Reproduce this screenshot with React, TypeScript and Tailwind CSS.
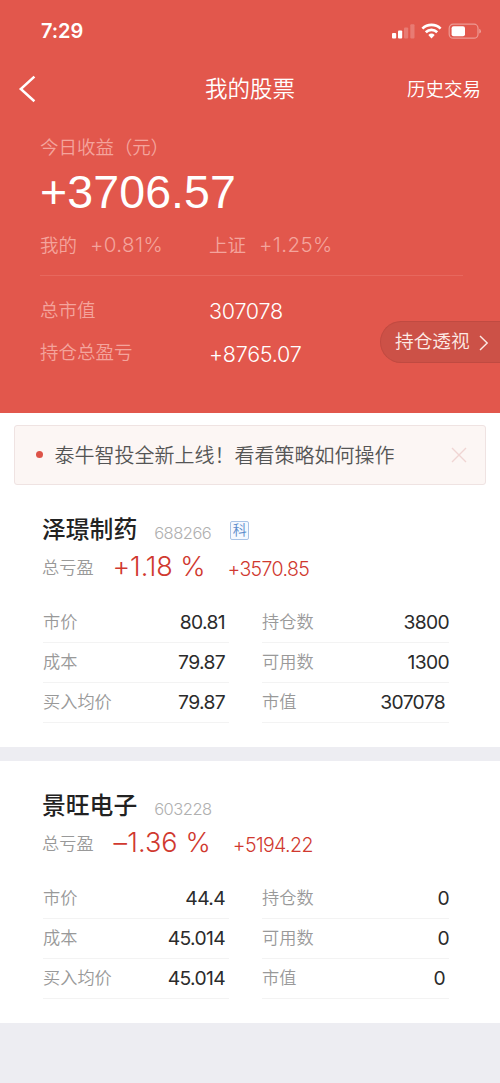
import clsx from 'clsx';

interface Row {
  label: string;
  value: string;
}

interface Holding {
  name: string;
  code: string;
  tag?: string;
  percent: string;
  profit: string;
  left: Row[];
  right: Row[];
}

const holdings: Holding[] = [
  {
    name: '泽璟制药',
    code: '688266',
    tag: '科',
    percent: '+1.18 %',
    profit: '+3570.85',
    left: [
      { label: '市价', value: '80.81' },
      { label: '成本', value: '79.87' },
      { label: '买入均价', value: '79.87' },
    ],
    right: [
      { label: '持仓数', value: '3800' },
      { label: '可用数', value: '1300' },
      { label: '市值', value: '307078' },
    ],
  },
  {
    name: '景旺电子',
    code: '603228',
    percent: '–1.36 %',
    profit: '+5194.22',
    left: [
      { label: '市价', value: '44.4' },
      { label: '成本', value: '45.014' },
      { label: '买入均价', value: '45.014' },
    ],
    right: [
      { label: '持仓数', value: '0' },
      { label: '可用数', value: '0' },
      { label: '市值', value: '0' },
    ],
  },
];

function StatusBar() {
  return (
    <div className="flex h-[62px] items-center justify-between pr-[19px] pl-[41px]">
      <span className="text-[20px] leading-6 font-semibold tracking-[-0.1px]">7:29</span>
      <svg width="90" height="18" viewBox="0 0 90 18" fill="#fff">
        <rect x="1" y="11" width="4.2" height="5.5" rx="1" />
        <rect x="7" y="8.5" width="4.2" height="8" rx="1" />
        <rect x="13" y="5.5" width="4.2" height="11" rx="1" opacity="0.22" />
        <rect x="19.3" y="2.3" width="4.2" height="14.2" rx="1" opacity="0.22" />
        <g fill="none" stroke="#fff" strokeWidth="2.7">
          <path d="M31.4 6.6a13 13 0 0 1 18.2 0" />
          <path d="M34.8 10.2a8.2 8.2 0 0 1 11.4 0" />
        </g>
        <path d="M37.3 13a4.7 4.7 0 0 1 6.4 0l-3.2 3.4z" />
        <rect x="58.2" y="2.2" width="28.8" height="14" rx="4" fill="none" stroke="#fff" strokeOpacity="0.4" strokeWidth="1.2" />
        <rect x="60.6" y="4.3" width="13.4" height="10" rx="2" />
        <path d="M88.3 6.8a2.6 2.6 0 0 1 0 4.8z" opacity="0.45" />
      </svg>
    </div>
  );
}

function NavBar() {
  return (
    <div className="grid h-[54px] grid-cols-[1fr_auto_1fr] items-center pr-[19px] pl-[18px]">
      <svg width="18" height="28" viewBox="0 0 18 28" fill="none" stroke="#fff" strokeWidth="2.5">
        <path d="M16.4 1.6 2.8 14 16.4 26.2" />
      </svg>
      <h1 className="pl-px text-[22.5px] leading-8">我的股票</h1>
      <span className="justify-self-end text-[18.5px] leading-8">历史交易</span>
    </div>
  );
}

function Summary() {
  return (
    <div className="pl-[40px]">
      <div className="mt-[17px] h-7 text-[18.5px] leading-7 text-[#f4a49c]">
        今日收益<span className="tracking-[-0.3px]">（元）</span>
      </div>
      <div className="mt-[4px] h-[54px] font-['Liberation_Sans',sans-serif] text-[46.5px] leading-[54px] tracking-[0.1px]">
        +3706.57
      </div>
      <div className="mt-[12px] flex h-7 text-[18.5px] leading-7 text-[#f4a49c]">
        <div className="flex w-[169px] gap-[13px]">
          <span>我的</span>
          <span className="text-[20.5px] tracking-[0.4px]">+0.81%</span>
        </div>
        <div className="flex gap-[13px]">
          <span>上证</span>
          <span className="text-[20.5px] tracking-[0.4px]">+1.25%</span>
        </div>
      </div>
      <div className="mt-[16px] mr-[37px] h-px bg-[#e7685e]" />
      <div className="mt-[14px] flex justify-between">
        <dl className="grid auto-rows-[42px] grid-cols-[169px_auto] items-center">
          <dt className="text-[18.5px] text-[#f4a49c]">总市值</dt>
          <dd className="pt-px text-[21.5px] tracking-[-0.25px]">307078</dd>
          <dt className="text-[18.5px] text-[#f4a49c]">持仓总盈亏</dt>
          <dd className="pt-[2px] text-[21.5px] tracking-[-0.25px]">+8765.07</dd>
        </dl>
        <button className="mt-[31px] flex h-[42px] w-[120px] items-center gap-[9px] rounded-l-full border border-r-0 border-[#c04a41] bg-[#cc5147] pt-px pl-[14px] text-[18.7px] text-[#fdebe6]">
          持仓透视
          <svg width="10" height="16" viewBox="0 0 10 16" fill="none" stroke="currentColor" strokeWidth="1.4">
            <path d="M1 1 8.2 8 1 15" />
          </svg>
        </button>
      </div>
    </div>
  );
}

function Notice() {
  return (
    <div className="mx-[14px] mt-[12px] flex h-[60px] items-center rounded-[3px] border border-[#efe3e2] bg-[#fcf6f4] pr-[18px] pl-[21px]">
      <span className="mb-[2px] size-[7px] rounded-full bg-[#dd5348]" />
      <p className="ml-[11.5px] flex-1 pt-px text-[20px] text-[#555]">泰牛智投全新上线！看看策略如何操作</p>
      <svg width="16" height="16" viewBox="0 0 16 16" stroke="#f0d5d3" strokeWidth="1.4">
        <path d="M1 1 15 15M15 1 1 15" />
      </svg>
    </div>
  );
}

function RowList({ rows, shiftLast }: { rows: Row[]; shiftLast?: boolean }) {
  return (
    <dl>
      {rows.map((row, i) => (
        <div
          key={row.label}
          className={clsx(
            'flex h-10 items-center justify-between border-b border-[#f3f3f3]',
            !shiftLast && 'pr-[4px]',
            shiftLast && i === rows.length - 1 && 'pr-[4px]',
          )}
        >
          <dt className="pb-[2px] text-[17.2px] text-[#999]">{row.label}</dt>
          <dd className="text-[19.3px] font-normal tracking-[-0.65px] text-[#2b2b2b]">{row.value}</dd>
        </div>
      ))}
    </dl>
  );
}

function HoldingCard({ item }: { item: Holding }) {
  return (
    <section className="bg-white pl-[42px]">
      <div className="flex h-[38px] items-center">
        <h2 className="text-[23.8px] font-medium text-[#222]">{item.name}</h2>
        <span className="mt-[6px] ml-[17px] text-[16.5px] tracking-[-0.5px] text-[#b0b0b0]">{item.code}</span>
        {item.tag && (
          <span className="ml-[19px] flex size-[19px] items-center justify-center rounded-[2px] border border-[#a9c3e6] bg-[#f5f9ff] text-[14px] leading-none text-[#5b8ccb]">
            {item.tag}
          </span>
        )}
      </div>
      <div className="flex h-[38px] items-center text-[#d0392f]">
        <span className="text-[17.2px] text-[#999]">总亏盈</span>
        <span
          className={clsx(
            'mb-[2px] text-[27px]',
            item.percent.startsWith('+') ? 'ml-[19px] tracking-[-0.1px]' : 'ml-[20px] tracking-[0.1px]',
          )}
        >
          {item.percent}
        </span>
        <span className="mt-[4px] ml-[22px] text-[19.5px] tracking-[-0.6px]">{item.profit}</span>
      </div>
      <div className="mt-[16px] ml-px grid grid-cols-[186px_187px] gap-x-[33px] pb-[24px]">
        <RowList rows={item.left} />
        <RowList rows={item.right} shiftLast />
      </div>
    </section>
  );
}

export default function App() {
  return (
    <div className="h-[1083px] w-[500px] overflow-hidden bg-[#ededf2] font-[Inter,'Noto_Sans_CJK_SC',sans-serif] font-[350]">
      <header className="h-[413px] bg-[#e2574c] text-white">
        <StatusBar />
        <NavBar />
        <Summary />
      </header>
      <main className="flex flex-col gap-[14px]">
        <div className="bg-white">
          <Notice />
          <div className="pt-[26px]">
            <HoldingCard item={holdings[0]} />
          </div>
        </div>
        <div className="bg-white pt-[26px]">
          <HoldingCard item={holdings[1]} />
        </div>
      </main>
    </div>
  );
}
